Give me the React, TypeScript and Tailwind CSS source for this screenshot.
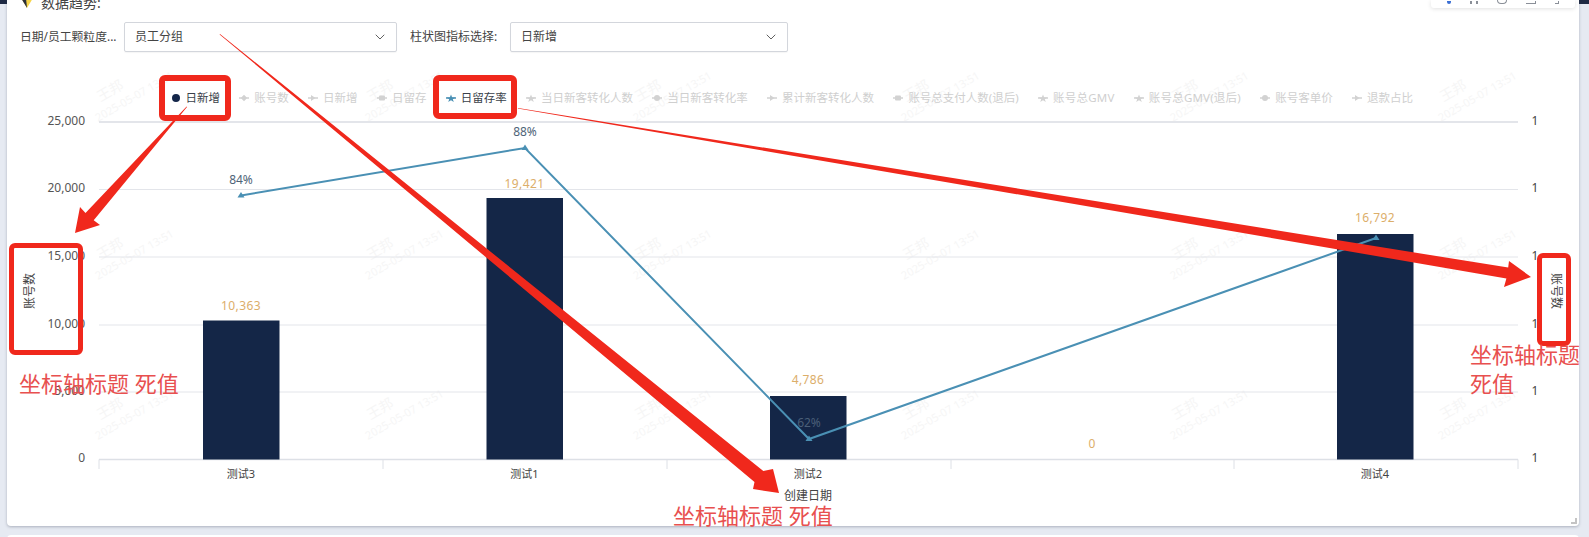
import { ChevronDown } from "lucide-react"

type LegendShape = "dot" | "diamond" | "arrow" | "rect" | "star"

const legendItems: { label: string; shape: LegendShape; active?: boolean }[] = [
  { label: "日新增", shape: "dot", active: true },
  { label: "账号数", shape: "diamond" },
  { label: "日新增", shape: "arrow" },
  { label: "日留存", shape: "rect" },
  { label: "日留存率", shape: "star", active: true },
  { label: "当日新客转化人数", shape: "star" },
  { label: "当日新客转化率", shape: "dot" },
  { label: "累计新客转化人数", shape: "arrow" },
  { label: "账号总支付人数(退后)", shape: "rect" },
  { label: "账号总GMV", shape: "star" },
  { label: "账号总GMV(退后)", shape: "star" },
  { label: "账号客单价", shape: "dot" },
  { label: "退款占比", shape: "arrow" },
]

const yTicks = [
  { label: "25,000", y: 122 },
  { label: "20,000", y: 189.5 },
  { label: "15,000", y: 257 },
  { label: "10,000", y: 325 },
  { label: "5,000", y: 392 },
  { label: "0", y: 459.5 },
]

const bars = [
  { name: "测试3", x: 203, top: 320.5, label: "10,363", labelY: 306 },
  { name: "测试1", x: 486.5, top: 198, label: "19,421", labelY: 184 },
  { name: "测试2", x: 770, top: 396, label: "4,786", labelY: 380 },
  { name: "测试4", x: 1337, top: 234, label: "16,792", labelY: 218 },
]

const linePoints = [
  { x: 241, y: 195.5, label: "84%", labelY: 180 },
  { x: 525, y: 148, label: "88%", labelY: 132 },
  { x: 809, y: 439, label: "62%", labelY: 423 },
  { x: 1376, y: 238 },
]

const xTicks = [99, 383, 667, 951, 1234, 1518]

const watermarkCols = [107, 377, 645, 913, 1182, 1450]
const watermarkRows = [90, 248, 408]

const arrows = [
  "187,107 93.7,220.3 100,225 75,233 80,207 85.5,213 186.6,106.6",
  "220,34 763.3,471.1 773,469 779,493 753,489 754.5,481.9 219.6,34.4",
  "518,108 1508.2,267.6 1509,261 1531,277 1504,287 1506.4,278.4 517.8,108.5",
]

function LegendIcon({ shape, active }: { shape: LegendShape; active?: boolean }) {
  const color = shape === "dot" && active ? "#14264a" : active ? "#4a90b4" : "#d2d2d2"
  return (
    <svg width="12" height="10" viewBox="0 0 12 10" className="shrink-0">
      {!(active && shape === "dot") && <line x1="1" y1="5" x2="11" y2="5" stroke={color} strokeWidth="1.5" />}
      {shape === "dot" && <circle cx="6" cy="5" r={active ? 4 : 3} fill={color} />}
      {shape === "diamond" && <path d="M6 1.8 9.2 5 6 8.2 2.8 5Z" fill={color} />}
      {shape === "arrow" && <path d="M4 2 8.5 5 4 8Z" fill={color} />}
      {shape === "rect" && <rect x="3" y="2.5" width="6" height="5" rx="1" fill={color} />}
      {shape === "star" && <path d="M6 1.5 7.2 4.5H10.5L7.8 6.3 8.8 9 6 7.2 3.2 9 4.2 6.3 1.5 4.5H4.8Z" fill={color} />}
    </svg>
  )
}

function Select({ value, width }: { value: string; width: string }) {
  return (
    <div className={`flex h-[30px] items-center justify-between rounded-[2px] border border-[#d3d6dc] bg-white pl-[10px] pr-[8px] text-[12px] text-[#444] shadow-[0_1px_1px_rgba(0,0,0,0.04)] ${width}`}>
      <span>{value}</span>
      <ChevronDown size={16} strokeWidth={1.4} className="text-[#555]" />
    </div>
  )
}

function Chart() {
  return (
    <svg width="1572" height="416" viewBox="7 110 1572 416" className="relative block">
      {yTicks.map((t) => (
        <g key={t.label}>
          {t.y < 459 && (
            <line x1="99" x2="1518" y1={t.y} y2={t.y} stroke="#e3e5ea" strokeWidth={t.y === 122 ? 2 : 1} />
          )}
          <text x="85" y={t.y + 2.5} textAnchor="end" fontSize="12" fill="#555">{t.label}</text>
          <text x="1535" y={t.y + 2.5} textAnchor="middle" fontSize="12" fill="#444">1</text>
        </g>
      ))}
      <line x1="99" x2="1518" y1="459.5" y2="459.5" stroke="#dde0e6" strokeWidth="1.5" />
      {xTicks.map((x) => (
        <line key={x} x1={x} x2={x} y1="459.5" y2="469" stroke="#dde0e6" />
      ))}
      {bars.map((b) => (
        <g key={b.name}>
          <rect x={b.x} y={b.top} width="76.5" height={459.5 - b.top} fill="#142647" />
          <text x={b.x + 38} y={b.labelY + 4} textAnchor="middle" fontSize="12" fill="#dcae6a" letterSpacing="0.4">{b.label}</text>
          <text x={b.x + 38} y="478" textAnchor="middle" fontSize="11" fill="#444">{b.name}</text>
        </g>
      ))}
      <text x="1092" y="448" textAnchor="middle" fontSize="12" fill="#dcae6a">0</text>
      <polyline points={linePoints.map((p) => `${p.x},${p.y}`).join(" ")} fill="none" stroke="#4a90b4" strokeWidth="2" />
      {linePoints.map((p) => (
        <g key={p.x}>
          <path d={`M${p.x} ${p.y - 3.5}L${p.x + 3.5} ${p.y + 2}H${p.x - 3.5}Z`} fill="#4a90b4" />
          {p.label && (
            <text x={p.x} y={p.labelY + 4} textAnchor="middle" fontSize="12" fill={p.label === "62%" ? "#4a5f78" : "#4f6478"}>{p.label}</text>
          )}
        </g>
      ))}
      <text x="808" y="500" textAnchor="middle" fontSize="12" fill="#444">创建日期</text>
      <text transform="translate(31 291) rotate(-90)" textAnchor="middle" dominantBaseline="middle" fontSize="12" fill="#444">账号数</text>
      <text transform="translate(1555 291) rotate(90)" textAnchor="middle" dominantBaseline="middle" fontSize="12" fill="#444">账号数</text>
    </svg>
  )
}

function Watermarks() {
  return (
    <>
      {watermarkRows.flatMap((top) =>
        watermarkCols.map((left) => (
          <div
            key={`${left}-${top}`}
            className="absolute origin-top-left -rotate-30 whitespace-nowrap text-[11px] leading-[17px] text-[#f6f6f6]"
            style={{ left: left - 31, top: top + 6 }}
          >
            <div className="pl-[12px] text-[14px]">王邦</div>
            <div>2025-05-07 13:51</div>
          </div>
        ))
      )}
    </>
  )
}

export default function App() {
  return (
    <div className="relative h-[537px] w-full overflow-hidden bg-[#e6eaf2] pl-[7px] pr-[10px] font-['Noto_Sans','Noto_Sans_CJK_SC',sans-serif]">
      <div className="absolute left-0 top-0 h-[4px] w-[7px] bg-[#1f2a44]" />
      <div className="absolute right-0 top-0 h-[4px] w-[10px] bg-[#1f2a44]" />

      {/* panel */}
      <div className="relative h-[526px] overflow-hidden rounded-b-[4px] bg-white shadow-[0_1px_3px_rgba(60,70,90,0.35)]">
        <Watermarks />
        <div className="relative -mt-[8px] flex h-[20px] items-center gap-[8px] pl-[14px]">
          <svg width="12" height="14" viewBox="0 0 12 14">
            <path d="M0 3H12L6 13Z" fill="#f7d54a" />
            <path d="M0 3H5L6 13Z" fill="#2c2f3a" />
          </svg>
          <span className="text-[14px] text-[#444]">数据趋势:</span>
        </div>

        <div className="relative mt-[10px] flex items-center pl-[13px]">
          <span className="w-[104px] whitespace-nowrap text-[11.8px] text-[#444]">日期/员工颗粒度...</span>
          <Select value="员工分组" width="w-[273px]" />
          <span className="ml-[13px] w-[100px] whitespace-nowrap text-[12px] text-[#444]">柱状图指标选择:</span>
          <Select value="日新增" width="w-[278px]" />
        </div>

        <div className="relative mt-[34px] flex h-[24px] items-center gap-[18.3px] pl-[162.5px] whitespace-nowrap text-[11.5px]">
          {legendItems.map((item, i) => (
            <div key={i} className={`flex items-center gap-[4px] ${item.active ? "text-[#3a3f4a]" : "text-[#cfcfcf]"}`}>
              <LegendIcon shape={item.shape} active={item.active} />
              <span className={item.label.includes("GMV") ? "tracking-[0.2px]" : ""}>{item.label}</span>
            </div>
          ))}
        </div>

        <Chart />

        {/* resize handle */}
        <div className="absolute bottom-[2px] right-[2px] h-[6px] w-[6px] border-b-2 border-r-2 border-[#c4c4c4]" />
      </div>

      <div className="mt-[9px] h-[10px] rounded-t-[4px] bg-white" />

      {/* floating toolbar */}
      <div className="absolute left-[1431px] top-0 flex h-[7.5px] w-[144px] items-end justify-around overflow-hidden rounded-b-[3px] bg-white px-[6px] pb-[4px] shadow-[0_1px_4px_rgba(0,0,0,0.12)]">
        <span className="h-[3px] w-[4px] rounded-b-full bg-[#3b6fd4]" />
        <span className="h-[3px] w-[8px] border-x-2 border-[#8a8f98]" />
        <span className="h-[4px] w-[10px] rounded-b-full border border-t-0 border-[#8a8f98]" />
        <span className="h-[3px] w-[10px] border-b border-r border-[#8a8f98]" />
        <span className="h-[3px] w-[4px] border-b border-r border-[#8a8f98]" />
      </div>

      {/* annotations */}
      <svg width="1589" height="537" viewBox="0 0 1589 537" className="pointer-events-none absolute left-0 top-0">
        {arrows.map((points) => (
          <polygon key={points} points={points} fill="#f0281c" />
        ))}
      </svg>
      <div className="absolute left-[159px] top-[75px] h-[46px] w-[72px] rounded-[6px] border-[6px] border-[#f0281c]" />
      <div className="absolute left-[433px] top-[75px] h-[44px] w-[84px] rounded-[6px] border-[6px] border-[#f0281c]" />
      <div className="absolute left-[9px] top-[243px] h-[112px] w-[74px] rounded-[6px] border-[5px] border-[#f0281c]" />
      <div className="absolute left-[1537px] top-[253px] h-[93px] w-[34px] rounded-[6px] border-[5px] border-[#f0281c]" />
      <div className="absolute left-[19px] top-[368px] whitespace-nowrap text-[22px] leading-[30px] text-[#e8504f]">坐标轴标题 死值</div>
      <div className="absolute left-[673px] top-[500px] whitespace-nowrap text-[22px] leading-[30px] text-[#e8504f]">坐标轴标题 死值</div>
      <div className="absolute left-[1470px] top-[340px] w-[112px] text-[22px] leading-[29px] text-[#e8504f]">坐标轴标题 死值</div>
    </div>
  )
}
